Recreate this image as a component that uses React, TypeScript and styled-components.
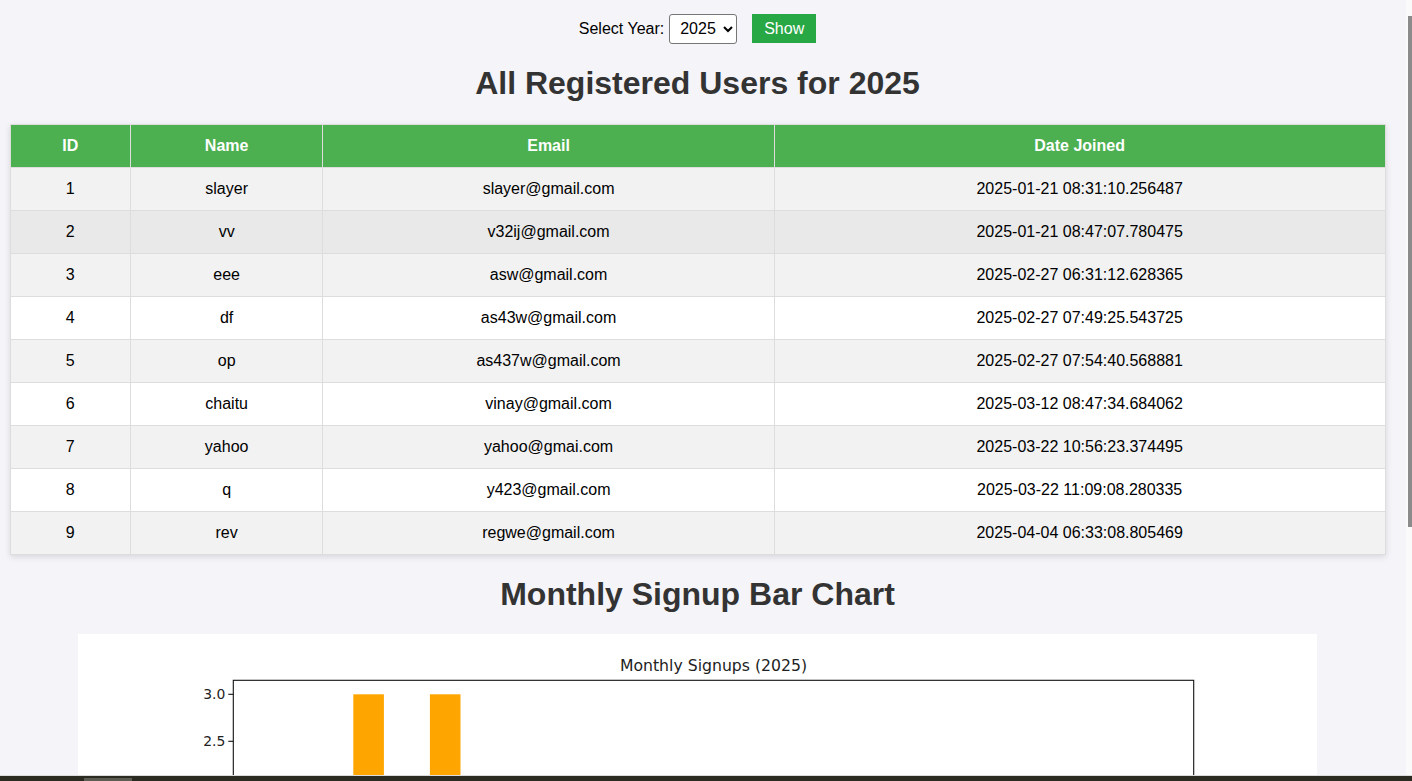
import React from "react";
import styled, { createGlobalStyle } from "styled-components";

const Global = createGlobalStyle`
  html, body {
    margin: 0;
    padding: 0;
    background: #f4f4f9;
    overflow: hidden;
  }
  body {
    font-family: "Liberation Sans", Arial, sans-serif;
    color: #000;
  }
`;

const Page = styled.div`
  width: 1395px;
  box-sizing: border-box;
  padding: 13.5px 10px 0;
`;

const Controls = styled.form`
  display: flex;
  justify-content: center;
  align-items: center;
  height: 30px;
  font-size: 16px;
`;

const Label = styled.label`
  margin-right: 5px;
  padding-top: 1px;
`;

const YearSelect = styled.select`
  font-family: "Liberation Sans", Arial, sans-serif;
  font-size: 16px;
  height: 30px;
  width: 68px;
  padding: 0 2px 0 6px;
  border: 1px solid #767676;
  border-radius: 3px;
  background: #fff;
  color: #000;
`;

const ShowButton = styled.button`
  margin-left: 15px;
  height: 29px;
  width: 64px;
  border: none;
  background: #28a745;
  color: #fff;
  font-family: "Liberation Sans", Arial, sans-serif;
  font-size: 16px;
  padding: 0;
`;

const Heading = styled.h1<{ $top?: number }>`
  margin: ${(p) => p.$top ?? 21.5}px 0 21.5px;
  font-size: 32px;
  font-weight: bold;
  color: #333;
  text-align: center;
  line-height: 37px;
`;

const Table = styled.table`
  width: 1376px;
  margin-left: -0.5px;
  border-collapse: collapse;
  background: #fff;
  box-shadow: 0 2px 6px rgba(0, 0, 0, 0.12);
  font-size: 16px;
`;

const Th = styled.th<{ $w: number }>`
  width: ${(p) => p.$w}px;
  background: #4caf50;
  color: #fff;
  font-weight: bold;
  border: 1px solid #ddd;
  padding: 12px 0;
  height: 18px;
  line-height: 18px;
  text-align: center;
`;

const Tr = styled.tr<{ $bg: string }>`
  background: ${(p) => p.$bg};
`;

const Td = styled.td`
  border: 1px solid #ddd;
  padding: 12px 0;
  height: 18px;
  line-height: 18px;
  text-align: center;
`;

const ChartBox = styled.div`
  width: 1239px;
  height: 480px;
  margin: 0 auto;
  background: #fff;
`;

const ScrollTrack = styled.div`
  position: fixed;
  top: 0;
  right: 0;
  width: 6px;
  height: 775px;
  background: #fafafa;
`;

const ScrollThumb = styled.div`
  position: absolute;
  top: 16px;
  left: 2px;
  width: 4px;
  height: 511px;
  background: #8b8b8b;
`;

const BottomBar = styled.div`
  position: fixed;
  left: 0;
  bottom: 0;
  width: 100%;
  height: 6px;
  background: #2b2b22;
  border-top: 1px solid #dcdcdc;
  box-sizing: border-box;
`;

const BottomThumb = styled.div`
  position: absolute;
  left: 84px;
  top: 2px;
  width: 48px;
  height: 3px;
  background: #5c5c52;
`;

const users = [
  [1, "slayer", "slayer@gmail.com", "2025-01-21 08:31:10.256487"],
  [2, "vv", "v32ij@gmail.com", "2025-01-21 08:47:07.780475"],
  [3, "eee", "asw@gmail.com", "2025-02-27 06:31:12.628365"],
  [4, "df", "as43w@gmail.com", "2025-02-27 07:49:25.543725"],
  [5, "op", "as437w@gmail.com", "2025-02-27 07:54:40.568881"],
  [6, "chaitu", "vinay@gmail.com", "2025-03-12 08:47:34.684062"],
  [7, "yahoo", "yahoo@gmai.com", "2025-03-22 10:56:23.374495"],
  [8, "q", "y423@gmail.com", "2025-03-22 11:09:08.280335"],
  [9, "rev", "regwe@gmail.com", "2025-04-04 06:33:08.805469"],
];

const rowBg = (i: number) => (i === 1 ? "#e9e9e9" : i % 2 === 0 ? "#f2f2f2" : "#ffffff");

const months = [2, 3, 3, 1, 0, 0, 0, 0, 0, 0, 0, 0];

function Chart() {
  const left = 155.3;
  const right = 1115.7;
  const top = 46.3;
  const zeroY = 342.3;
  const perUnit = 94;
  const ticks = [2.5, 3];
  const font = "'DejaVu Sans', sans-serif";
  return (
    <svg width="1239" height="480" viewBox="0 0 1239 480">
      <text x={(left + right) / 2} y="37" textAnchor="middle" fontFamily={font} fontSize="15.7" fill="#222">
        Monthly Signups (2025)
      </text>
      {months.map((v, i) => {
        const cx = 214 + 76.6 * i;
        const h = v * perUnit;
        return v > 0 ? (
          <rect key={i} x={cx - 15.3} y={zeroY - h} width={30.6} height={h} fill="#ffa500" />
        ) : null;
      })}
      <rect x={left} y={top} width={right - left} height={zeroY - top} fill="none" stroke="#111" strokeWidth="1.1" />
      {[0, 0.5, 1, 1.5, 2, 2.5, 3].map((t) => {
        const y = zeroY - t * perUnit;
        return <line key={t} x1={left - 5} x2={left} y1={y} y2={y} stroke="#111" strokeWidth="1.1" />;
      })}
      {ticks.map((t) => {
        const y = zeroY - t * perUnit;
        return (
          <text key={t} x={left - 8} y={y + 4.8} textAnchor="end" fontFamily={font} fontSize="13.9" fill="#222">
            {t.toFixed(1)}
          </text>
        );
      })}
    </svg>
  );
}

export default function App() {
  return (
    <>
      <Global />
      <Page>
        <Controls onSubmit={(e) => e.preventDefault()}>
          <Label htmlFor="year">Select Year:</Label>
          <YearSelect id="year" defaultValue="2025">
            <option value="2025">2025</option>
            <option value="2024">2024</option>
          </YearSelect>
          <ShowButton type="submit">Show</ShowButton>
        </Controls>
        <Heading>All Registered Users for 2025</Heading>
        <Table>
          <thead>
            <tr>
              <Th $w={120}>ID</Th>
              <Th $w={192}>Name</Th>
              <Th $w={452}>Email</Th>
              <Th $w={612}>Date Joined</Th>
            </tr>
          </thead>
          <tbody>
            {users.map((u, i) => (
              <Tr key={u[0] as number} $bg={rowBg(i)}>
                <Td>{u[0]}</Td>
                <Td>{u[1]}</Td>
                <Td>{u[2]}</Td>
                <Td>{u[3]}</Td>
              </Tr>
            ))}
          </tbody>
        </Table>
        <Heading as="h2" $top={21}>Monthly Signup Bar Chart</Heading>
        <ChartBox>
          <Chart />
        </ChartBox>
      </Page>
      <ScrollTrack>
        <ScrollThumb />
      </ScrollTrack>
      <BottomBar>
        <BottomThumb />
      </BottomBar>
    </>
  );
}
